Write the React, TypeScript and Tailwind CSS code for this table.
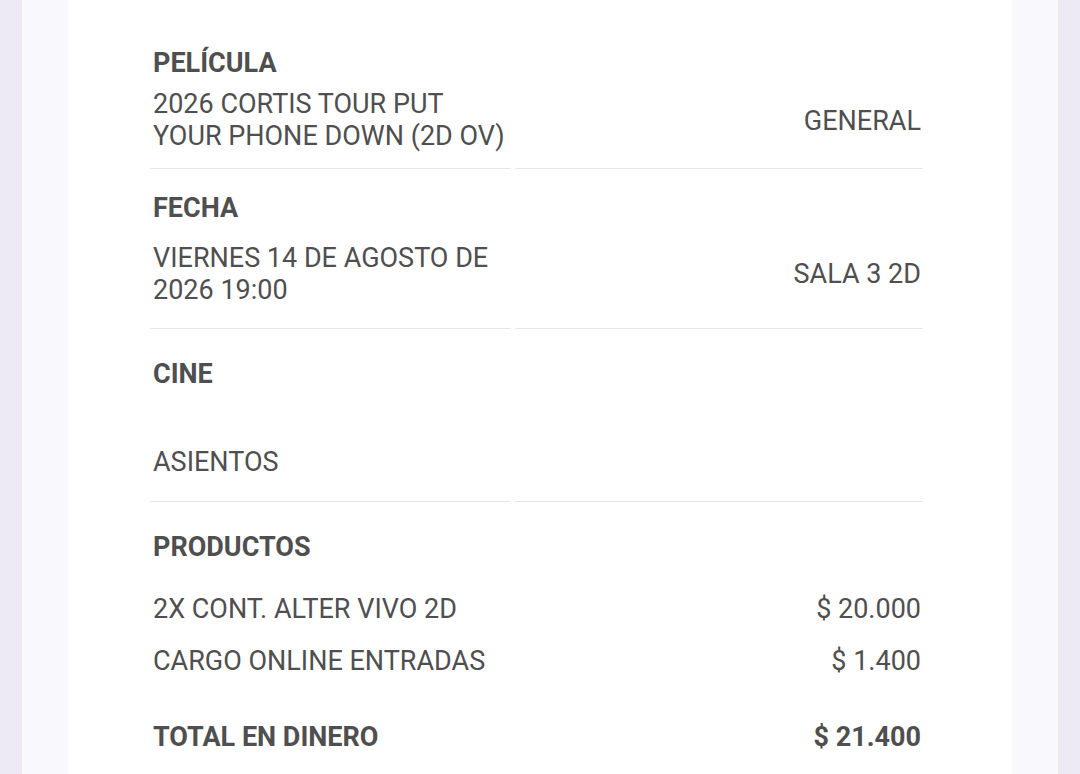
const Label = ({ children }: { children: React.ReactNode }) => (
  <div className="pl-[3px] text-[27px] leading-[32px] font-bold">{children}</div>
);

export default function App() {
  return (
    <div className="min-h-[774px] bg-[#edeaf4] px-[22px] font-['Roboto',sans-serif] text-[#4f4f4f]">
      <div className="min-h-[774px] bg-[#f9f8fc] px-[46px]">
        <div className="min-h-[774px] bg-white pl-[82px] pr-[89px] pt-[47px]">
          {/* Película */}
          <Label>PELÍCULA</Label>
          <div className="mt-[9px] flex gap-[5px] text-[27px] leading-[32px]">
            <div className="w-[360px] border-b border-[#e6e6e6] pb-[16px] pl-[3px]">
              2026 CORTIS TOUR PUT
              <br />
              YOUR PHONE DOWN (2D OV)
            </div>
            <div className="flex flex-1 items-start justify-end border-b border-[#e6e6e6] pr-[2px] pt-[17px]">
              GENERAL
            </div>
          </div>

          {/* Fecha */}
          <div className="pt-[23px]">
            <Label>FECHA</Label>
          </div>
          <div className="mt-[18px] flex gap-[5px] text-[27px] leading-[32px]">
            <div className="w-[360px] border-b border-[#e6e6e6] pb-[22px] pl-[3px]">
              VIERNES 14 DE AGOSTO DE
              <br />
              2026 19:00
            </div>
            <div className="flex flex-1 items-start justify-end border-b border-[#e6e6e6] pr-[2px] pt-[16px]">
              SALA 3 2D
            </div>
          </div>

          {/* Cine */}
          <div className="pt-[29px]">
            <Label>CINE</Label>
          </div>
          <div className="mt-[56px] flex gap-[5px] text-[27px] leading-[32px]">
            <div className="w-[360px] border-b border-[#e6e6e6] pb-[23px] pl-[3px]">ASIENTOS</div>
            <div className="flex-1 border-b border-[#e6e6e6]" />
          </div>

          {/* Productos */}
          <div className="pt-[29px]">
            <Label>PRODUCTOS</Label>
          </div>
          <div className="mt-[30px] flex flex-col gap-[20px] pl-[3px] pr-[2px] text-[27px] leading-[32px]">
            <div className="flex justify-between">
              <span>2X CONT. ALTER VIVO 2D</span>
              <span>$ 20.000</span>
            </div>
            <div className="flex justify-between">
              <span>CARGO ONLINE ENTRADAS</span>
              <span>$ 1.400</span>
            </div>
          </div>
          <div className="mt-[44px] flex justify-between pl-[3px] pr-[2px] text-[27px] leading-[32px] font-bold">
            <span>TOTAL EN DINERO</span>
            <span>$ 21.400</span>
          </div>
        </div>
      </div>
    </div>
  );
}
